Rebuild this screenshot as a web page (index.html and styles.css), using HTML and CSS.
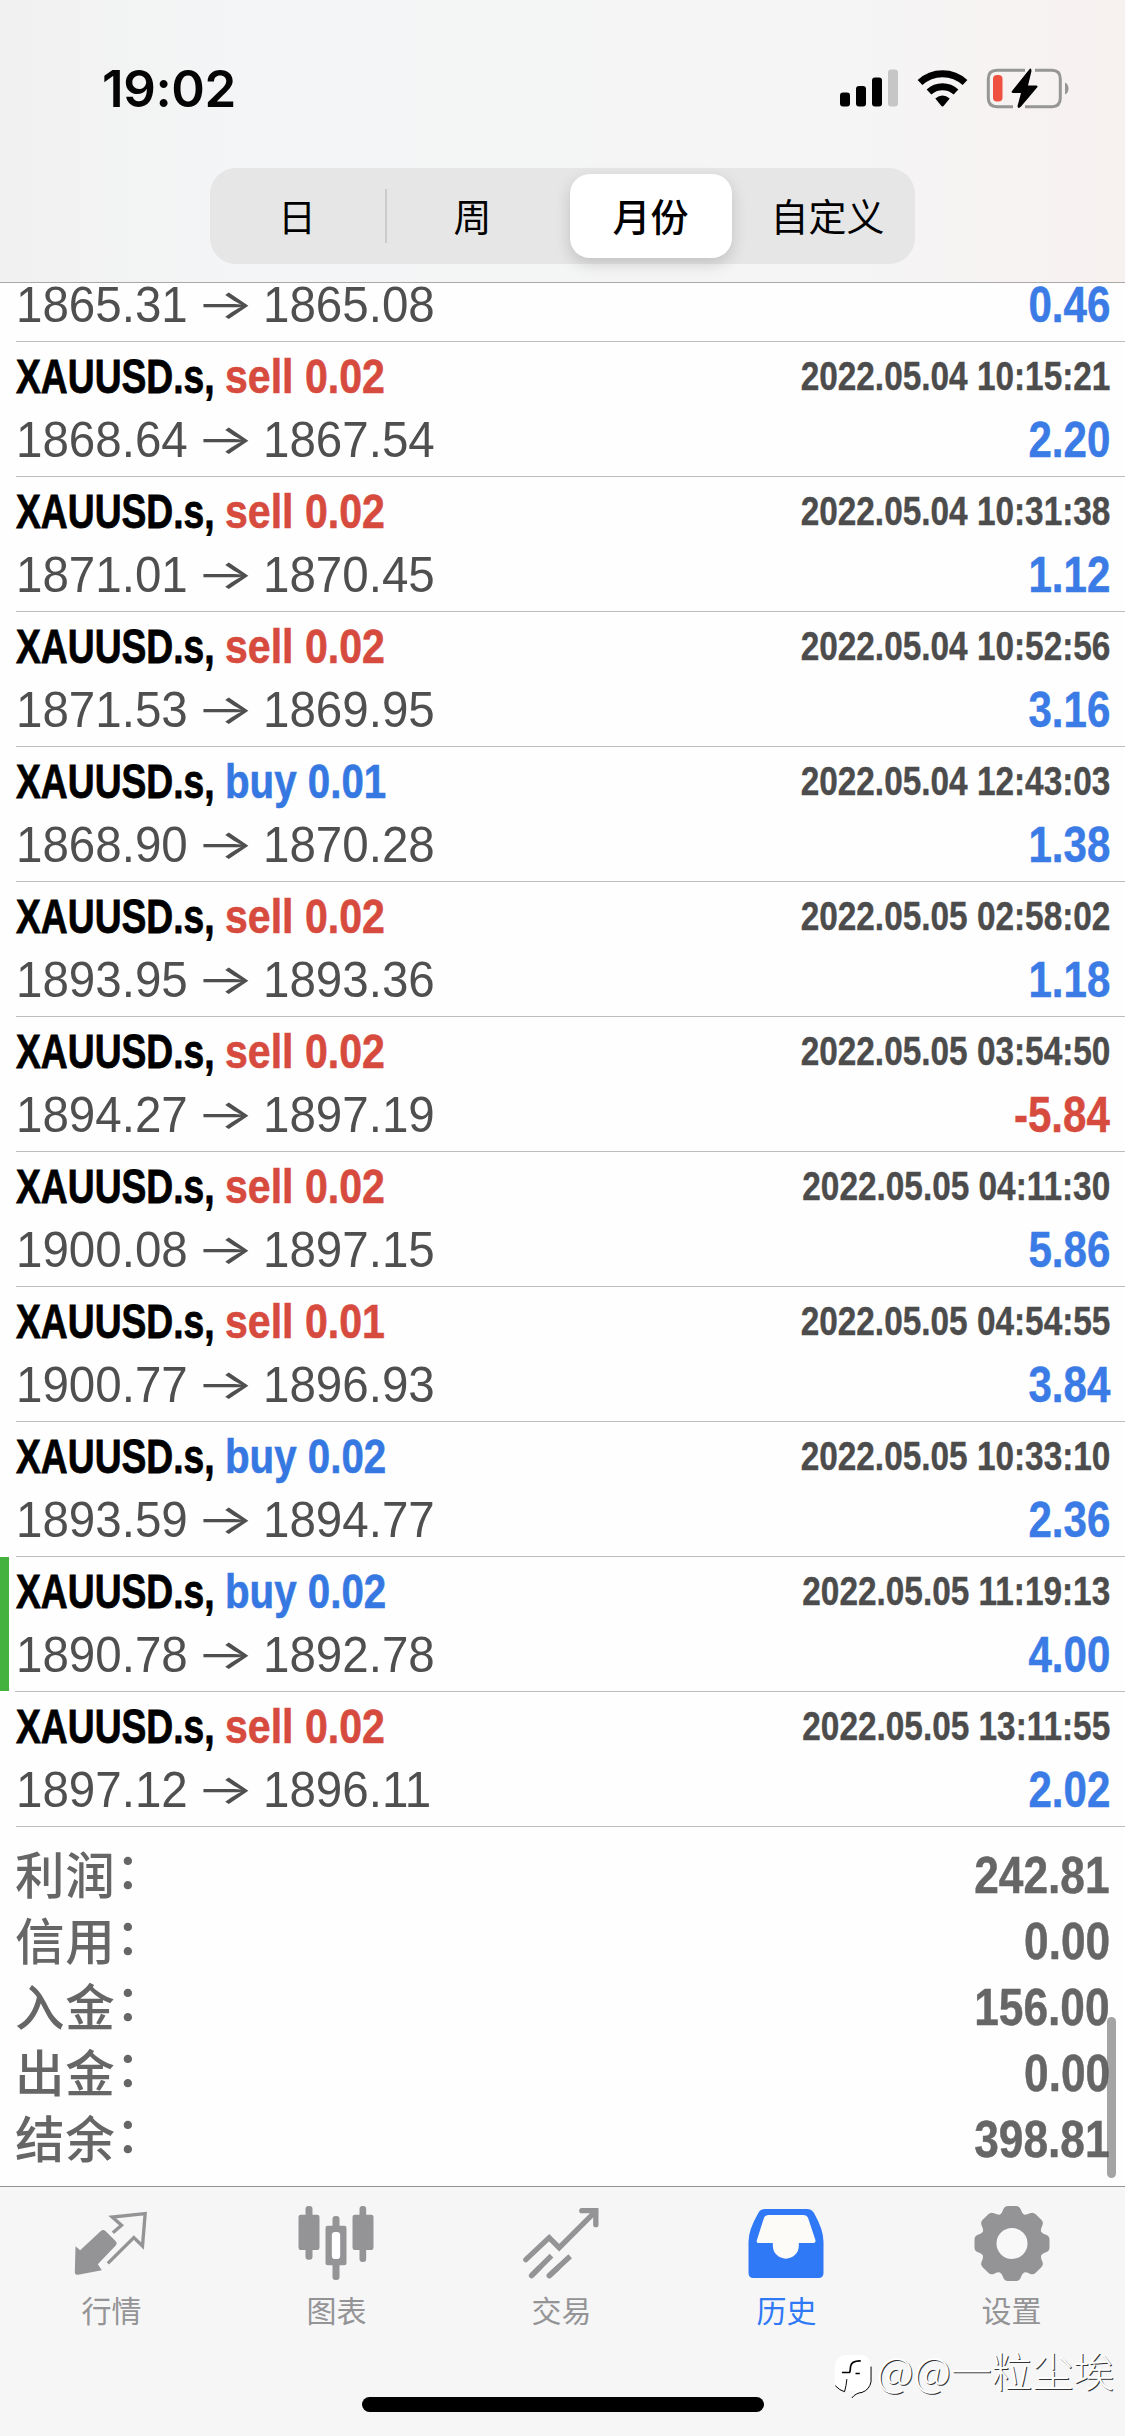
FILE: index.html
```html
<!DOCTYPE html>
<html lang="zh-CN">
<head>
<meta charset="utf-8">
<title>历史</title>
<link rel="stylesheet" href="styles.css">
</head>
<body>
<div class="screen">
  <header class="top">
    <div class="status">
      <span class="clock">19:02</span>
      <svg class="status-icons" viewBox="0 0 240 60" width="240" height="60">
        <g transform="translate(0 -0.5)">
          <rect x="5" y="33" width="10" height="14" rx="3"/>
          <rect x="21" y="26.500" width="10" height="20.500" rx="3"/>
          <rect x="37" y="18" width="10" height="29" rx="3"/>
          <rect x="53" y="10" width="10" height="37" rx="3" fill="#c6c6c6"/>
        </g>
        <g fill="none" stroke="#000" stroke-width="7">
          <path d="M85 22.500 A33 33 0 0 1 130 22.500"/>
          <path d="M94 32 A20 20 0 0 1 121 32"/>
        </g>
        <path d="M100.300 38.500 Q107.500 32.500 114.700 38.500 L109 45.500 Q107.500 47.500 106 45.500 Z"/>
        <path d="M190 10.300 H162 Q153.300 10.300 153.300 19 V38 Q153.300 46.700 162 46.700 H178 M190 46.700 H217 Q225.300 46.700 225.300 38 V19 Q225.300 10.300 217 10.300 H200" fill="none" stroke="#969696" stroke-width="3"/>
        <rect x="158" y="15" width="9.500" height="26.500" rx="4" fill="#f0503f"/>
        <path d="M195 8.500 L177 31 Q176 33 178 33 H186 L182.500 46 Q183 49.500 186 46.500 L202.500 27 Q203 25.500 201 25.500 H193 L196.500 11 Q196.500 8 195 8.500 Z"/>
        <path d="M230 22.500 Q233.500 24 233.500 28.500 Q233.500 33 230 34.500 Z" fill="#969696"/>
      </svg>
    </div>
    <nav class="segments">
      <span class="segment">日</span>
      <span class="segment divided">周</span>
      <span class="segment selected">月份</span>
      <span class="segment">自定义</span>
    </nav>
  </header>

  <main class="history">
    <article class="deal clipped">
      <div class="line result"><span class="price">1865.31</span><span class="arrow">→</span><span class="price">1865.08</span><span class="profit">0.46</span></div>
    </article>
    <article class="deal">
      <div class="line head"><span class="symbol">XAUUSD.s,</span><span class="side sell">sell 0.02</span><time class="time">2022.05.04 10:15:21</time></div>
      <div class="line result"><span class="price">1868.64</span><span class="arrow">→</span><span class="price">1867.54</span><span class="profit">2.20</span></div>
    </article>
    <article class="deal">
      <div class="line head"><span class="symbol">XAUUSD.s,</span><span class="side sell">sell 0.02</span><time class="time">2022.05.04 10:31:38</time></div>
      <div class="line result"><span class="price">1871.01</span><span class="arrow">→</span><span class="price">1870.45</span><span class="profit">1.12</span></div>
    </article>
    <article class="deal">
      <div class="line head"><span class="symbol">XAUUSD.s,</span><span class="side sell">sell 0.02</span><time class="time">2022.05.04 10:52:56</time></div>
      <div class="line result"><span class="price">1871.53</span><span class="arrow">→</span><span class="price">1869.95</span><span class="profit">3.16</span></div>
    </article>
    <article class="deal">
      <div class="line head"><span class="symbol">XAUUSD.s,</span><span class="side buy">buy 0.01</span><time class="time">2022.05.04 12:43:03</time></div>
      <div class="line result"><span class="price">1868.90</span><span class="arrow">→</span><span class="price">1870.28</span><span class="profit">1.38</span></div>
    </article>
    <article class="deal">
      <div class="line head"><span class="symbol">XAUUSD.s,</span><span class="side sell">sell 0.02</span><time class="time">2022.05.05 02:58:02</time></div>
      <div class="line result"><span class="price">1893.95</span><span class="arrow">→</span><span class="price">1893.36</span><span class="profit">1.18</span></div>
    </article>
    <article class="deal">
      <div class="line head"><span class="symbol">XAUUSD.s,</span><span class="side sell">sell 0.02</span><time class="time">2022.05.05 03:54:50</time></div>
      <div class="line result"><span class="price">1894.27</span><span class="arrow">→</span><span class="price">1897.19</span><span class="profit loss">-5.84</span></div>
    </article>
    <article class="deal">
      <div class="line head"><span class="symbol">XAUUSD.s,</span><span class="side sell">sell 0.02</span><time class="time">2022.05.05 04:11:30</time></div>
      <div class="line result"><span class="price">1900.08</span><span class="arrow">→</span><span class="price">1897.15</span><span class="profit">5.86</span></div>
    </article>
    <article class="deal">
      <div class="line head"><span class="symbol">XAUUSD.s,</span><span class="side sell">sell 0.01</span><time class="time">2022.05.05 04:54:55</time></div>
      <div class="line result"><span class="price">1900.77</span><span class="arrow">→</span><span class="price">1896.93</span><span class="profit">3.84</span></div>
    </article>
    <article class="deal">
      <div class="line head"><span class="symbol">XAUUSD.s,</span><span class="side buy">buy 0.02</span><time class="time">2022.05.05 10:33:10</time></div>
      <div class="line result"><span class="price">1893.59</span><span class="arrow">→</span><span class="price">1894.77</span><span class="profit">2.36</span></div>
    </article>
    <article class="deal marked">
      <div class="line head"><span class="symbol">XAUUSD.s,</span><span class="side buy">buy 0.02</span><time class="time">2022.05.05 11:19:13</time></div>
      <div class="line result"><span class="price">1890.78</span><span class="arrow">→</span><span class="price">1892.78</span><span class="profit">4.00</span></div>
    </article>
    <article class="deal">
      <div class="line head"><span class="symbol">XAUUSD.s,</span><span class="side sell">sell 0.02</span><time class="time">2022.05.05 13:11:55</time></div>
      <div class="line result"><span class="price">1897.12</span><span class="arrow">→</span><span class="price">1896.11</span><span class="profit">2.02</span></div>
    </article>

    <section class="summary">
      <div class="total"><span class="label">利润<span class="colon">：</span></span><span class="value">242.81</span></div>
      <div class="total"><span class="label">信用<span class="colon">：</span></span><span class="value">0.00</span></div>
      <div class="total"><span class="label">入金<span class="colon">：</span></span><span class="value">156.00</span></div>
      <div class="total"><span class="label">出金<span class="colon">：</span></span><span class="value">0.00</span></div>
      <div class="total"><span class="label">结余<span class="colon">：</span></span><span class="value">398.81</span></div>
    </section>
    <div class="scrollbar"></div>
  </main>

  <footer class="bottom">
    <nav class="tabs">
      <div class="tab">
        <svg class="tab-icon" viewBox="31.5 21 252 252">
          <path d="M48 154 L62 166 L124 108 Q131 102 138 108 L168 138 Q175 145 168 152 L115 208 L127 226 L56 239 Q46 241 46 231 Z" fill="currentColor"/>
          <path d="M160 113 L186 91 L158 66 L257 56 L249 153 L223 128 L145 205" fill="none" stroke="currentColor" stroke-width="10"/>
        </svg>
        <span class="tab-label">行情</span>
      </div>
      <div class="tab">
        <svg class="tab-icon" viewBox="706.5 21 252 252" fill="currentColor">
          <rect x="738" y="33" width="21" height="161" rx="9"/>
          <rect x="717" y="59" width="63" height="106" rx="7"/>
          <rect x="900" y="33" width="20" height="168" rx="9"/>
          <rect x="879" y="59" width="63" height="106" rx="7"/>
          <rect x="819" y="63" width="21" height="192" rx="9"/>
          <rect x="798" y="92" width="63" height="119" rx="7"/>
          <rect x="817" y="111" width="25" height="81" rx="10" fill="#fff"/>
        </svg>
        <span class="tab-label">图表</span>
      </div>
      <div class="tab">
        <svg class="tab-icon" viewBox="31.5 21 252 252" fill="none" stroke="currentColor" stroke-width="16" stroke-linecap="round">
          <path d="M49 194 L119 128 L149 158 L258 49"/>
          <path d="M217 47 H259 V89"/>
          <path d="M66 242 L126 182 M119 242 L182 184" stroke-linecap="butt"/>
          <path d="M66 242 L90 218 M119 242 L145 218"/>
        </svg>
        <span class="tab-label">交易</span>
      </div>
      <div class="tab active">
        <svg class="tab-icon" viewBox="706.5 21 252 252">
          <path d="M766 42 H892 Q907 42 914 55 Q942 105 942 140 V234 Q942 249 927 249 H732 Q717 249 717 234 V140 Q717 105 746 55 Q752 42 766 42 Z" fill="currentColor"/>
          <path d="M778 60 H881 Q892 60 896 70 L918 136 Q919 144 912 144 H868 V152 A39 39 0 0 1 790 152 V144 H747 Q740 144 742 136 L763 70 Q767 60 778 60 Z" fill="#fcfbf8"/>
        </svg>
        <span class="tab-label">历史</span>
      </div>
      <div class="tab">
        <svg class="tab-icon" viewBox="-42 -41.5 84 84" fill="currentColor">
          <defs><path id="tooth" d="M-4 -37.500 Q-7.500 -37.500 -8.800 -34 Q-10.500 -28.500 -15 -27.500 L0 -15 L15 -27.500 Q10.500 -28.500 8.800 -34 Q7.500 -37.500 4 -37.500 Z"/></defs>
          <circle r="29.500"/>
          <use href="#tooth"/><use href="#tooth" transform="rotate(45)"/><use href="#tooth" transform="rotate(90)"/><use href="#tooth" transform="rotate(135)"/><use href="#tooth" transform="rotate(180)"/><use href="#tooth" transform="rotate(225)"/><use href="#tooth" transform="rotate(270)"/><use href="#tooth" transform="rotate(315)"/>
          <circle r="15.500" fill="#f8f8f8"/>
        </svg>
        <span class="tab-label">设置</span>
      </div>
    </nav>
    <div class="home-indicator"></div>
    <div class="watermark">
      <svg class="watermark-logo" viewBox="0 0 130 140" width="43" height="47">
        <path d="M40 5 H85 Q113 8 115 38 V80 Q113 108 90 116 Q70 118 60 134 Q62 118 70 112 L32 112 Q6 104 5 80 V40 Q8 8 40 5 Z" fill="#fff"/>
        <path d="M84 23 Q56 22 53 40 Q52 55 50 58 H27 M68 61 H81" fill="none" stroke="#000" stroke-width="5"/>
        <path d="M42 78 Q40 98 35 116 Q20 112 7 98 M115 40 V86 Q110 110 88 118 Q68 120 57 135" fill="none" stroke="#000" stroke-width="3"/>
      </svg>
      <span class="watermark-name">@@一粒尘埃</span>
    </div>
  </footer>
</div>
</body>
</html>
```
FILE: styles.css
```css
* {
  box-sizing: border-box;
}

body {
  margin: 0;
  background: #fff;
  font-family: "Liberation Sans", "Noto Sans CJK SC", sans-serif;
}

.screen {
  display: flex;
  flex-direction: column;
  width: 1125px;
  height: 2436px;
  overflow: hidden;
  background: #fefefe;
}

/* Header */
.top {
  flex: none;
  display: flex;
  flex-direction: column;
  align-items: center;
  height: 283px;
  border-bottom: 1px solid #a9a9a9;
  background: linear-gradient(90deg, #f1f1f1 0%, #f4f5f6 22%, #f5f5f5 75%, #f7f1f0 100%);
}

.status {
  display: flex;
  justify-content: space-between;
  width: 100%;
  height: 168px;
  padding: 59px 50px 0 102px;
}

.clock {
  font: 600 51px/60px "Inter", "Liberation Sans", sans-serif;
  letter-spacing: -0.4px;
  color: #050505;
}

.status-icons {
  display: block;
  margin-top: 1px;
}

.segments {
  display: grid;
  grid-template-columns: 175px 176px 180px 174px;
  width: 705px;
  height: 96px;
  padding: 6px 0;
  border-radius: 26px;
  background: #e6e6e7;
}

.segment {
  display: flex;
  align-items: center;
  justify-content: center;
  padding: 0 1px 3px 0;
  font: 400 38px/1 "Noto Sans CJK SC", sans-serif;
  color: #000;
}

.segment.divided {
  background: linear-gradient(#cbcbcc, #cbcbcc) left center / 2px 54px no-repeat;
}

.segment.selected {
  margin: 0 9px;
  border-radius: 20px;
  background: #fff;
  box-shadow: 0 6px 16px rgba(0, 0, 0, 0.16);
  font-weight: 500;
}

/* Deals */
.history {
  position: relative;
  flex: none;
  height: 1903px;
}

.deal {
  height: 135px;
  margin-left: 16px;
  padding-right: 15px;
  border-bottom: 1px solid #bdbdbd;
}

.deal.clipped {
  height: 59px;
}

.deal.marked {
  margin-left: 0;
  padding-left: 16px;
  background: linear-gradient(#44b23f, #44b23f) left top / 9px 100% no-repeat;
  border-image: linear-gradient(90deg, #fefefe 16px, #bdbdbd 16px) 1;
}

.line {
  display: flex;
  white-space: nowrap;
}

.head {
  height: 69px;
  font-size: 49px;
  font-weight: 700;
  line-height: 68px;
}

.result {
  height: 56px;
  font-size: 49.5px;
  line-height: 57px;
  color: #4f4f4f;
}

.clipped .result {
  height: 42px;
  line-height: 43px;
}

.symbol {
  width: 208px;
  transform: scaleX(0.76);
  transform-origin: left;
  -webkit-text-stroke: 0.8px currentColor;
  color: #000;
}

.side {
  width: 160px;
  margin-left: 1px;
  transform-origin: left;
  -webkit-text-stroke: 0.6px currentColor;
}

.sell {
  transform: scaleX(0.838);
  color: #d64b3e;
}

.buy {
  transform: scaleX(0.822);
  color: #3678e2;
}

.time {
  margin-left: auto;
  transform: scaleX(0.834);
  transform-origin: right;
  font-size: 40px;
  line-height: 68px;
  -webkit-text-stroke: 0.4px currentColor;
  color: #4c4c4c;
}

.price {
  width: 173px;
  transform: scaleX(0.96);
  transform-origin: left;
}

.arrow {
  width: 74px;
  transform: translateX(-1px) scaleX(1.5);
  text-align: center;
  font-family: "Inter", sans-serif;
  font-size: 41px;
  font-weight: 400;
}

.profit {
  margin-left: auto;
  transform: scaleX(0.85);
  transform-origin: right;
  font-weight: 700;
  -webkit-text-stroke: 0.5px currentColor;
  color: #3a7be6;
}

.profit.loss {
  color: #d64b3e;
}

/* Totals */
.summary {
  padding: 15px 15px 0 15px;
  color: #666;
}

.total {
  display: flex;
  justify-content: space-between;
  height: 66px;
  line-height: 66px;
}

.label {
  font-family: "Noto Sans CJK SC", sans-serif;
  font-size: 49.5px;
  font-weight: 500;
  letter-spacing: 0.8px;
  line-height: 61px;
}

.colon {
  display: inline-block;
  transform: translateY(-5px);
}

.value {
  transform: scaleX(0.843);
  transform-origin: right;
  font-size: 52.5px;
  font-weight: 700;
  -webkit-text-stroke: 0.5px currentColor;
}

.scrollbar {
  position: absolute;
  top: 1734px;
  right: 9px;
  width: 9px;
  height: 161px;
  border-radius: 5px;
  background: rgba(90, 90, 90, 0.55);
}

/* Tab bar */
.bottom {
  position: relative;
  flex: none;
  height: 250px;
  border-top: 1px solid #8f9391;
  background: #f6f6f7;
}

.tabs {
  display: grid;
  grid-template-columns: repeat(5, 1fr);
  padding-top: 15px;
}

.tab {
  display: flex;
  flex-direction: column;
  align-items: center;
  color: #949496;
}

.tab.active {
  color: #3079f6;
}

.tab-icon {
  display: block;
  width: 84px;
  height: 84px;
  margin-right: 1px;
}

.tab-label {
  margin: 3px 2px 0 0;
  font: 400 30px/40px "Noto Sans CJK SC", sans-serif;
}

.home-indicator {
  width: 402px;
  height: 15px;
  margin: 68px auto 0;
  border-radius: 8px;
  background: #000;
}

.watermark {
  position: absolute;
  top: 160px;
  right: 11px;
  display: flex;
}

.watermark-logo {
  margin: 6px 1px 0 0;
}

.watermark-name {
  font: 300 40.8px/46px "Noto Sans CJK SC", sans-serif;
  color: #fff;
  text-shadow: 1px 1px 0 #333;
}
```
